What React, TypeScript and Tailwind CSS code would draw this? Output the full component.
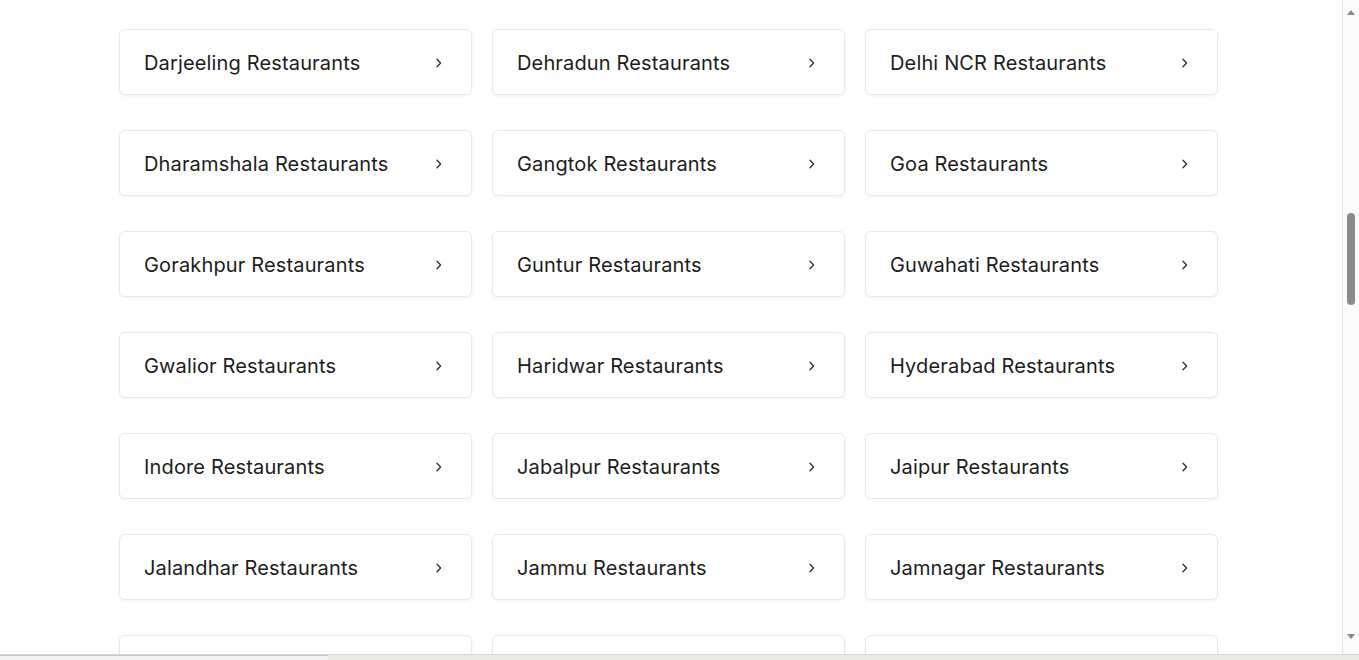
const cities = [
  "Darjeeling", "Dehradun", "Delhi NCR",
  "Dharamshala", "Gangtok", "Goa",
  "Gorakhpur", "Guntur", "Guwahati",
  "Gwalior", "Haridwar", "Hyderabad",
  "Indore", "Jabalpur", "Jaipur",
  "Jalandhar", "Jammu", "Jamnagar",
  "Jhansi", "Jodhpur", "Jorhat",
];

function Chevron() {
  return (
    <svg width="6" height="10" viewBox="0 0 6 10" fill="none" className="shrink-0 mt-[2px]">
      <path d="M1 1.2 L4.6 5 L1 8.8" stroke="#2d2d2d" strokeWidth="1.3" strokeLinecap="round" strokeLinejoin="round" />
    </svg>
  );
}

export default function App() {
  return (
    <div className="h-[660px] w-[1359px] overflow-hidden bg-white flex flex-col" style={{ fontFamily: "Inter, 'Open Sans', sans-serif" }}>
      <div className="flex flex-1 min-h-0">
        {/* Content */}
        <main className="flex-1 min-w-0 overflow-hidden pt-[29px]">
          <div className="w-[1099px] ml-[119px] grid grid-cols-3 gap-x-[20px] gap-y-[35px]">
            {cities.map((c) => (
              <a
                key={c}
                href="#"
                className="h-[66px] flex items-center justify-between pl-[24px] pr-[29px] border border-[#e8e8e8] rounded-[6px] bg-white shadow-[0_1px_3px_rgba(28,28,28,0.06)]"
              >
                <span className="mt-[2px] text-[20px] leading-[24px] tracking-[0.15px] text-[#1c1c1c]">{c} Restaurants</span>
                <Chevron />
              </a>
            ))}
          </div>
        </main>

        {/* Scrollbar */}
        <div className="w-[17px] shrink-0 border-l border-[#e6e6e6] bg-[#fafafa] flex flex-col items-center pt-[10px] pb-[15px]">
          <div className="w-0 h-0 border-l-[4px] border-r-[4px] border-b-[5px] border-l-transparent border-r-transparent border-b-[#8a8a8a]" />
          <div className="h-[198px] shrink-0" />
          <div className="w-[8px] h-[92px] rounded-full bg-[#8a8a8a]" />
          <div className="flex-1" />
          <div className="w-0 h-0 border-l-[4px] border-r-[4px] border-t-[5px] border-l-transparent border-r-transparent border-t-[#8a8a8a]" />
        </div>
      </div>

      {/* Bottom strip */}
      <div className="h-[6px] shrink-0 border-t border-[#d6d6d6] flex">
        <div className="w-[328px] bg-[#f4f4f4] border-t border-[#c8c8c8]" />
        <div className="flex-1 bg-[#e9e9e4]" />
      </div>
    </div>
  );
}
